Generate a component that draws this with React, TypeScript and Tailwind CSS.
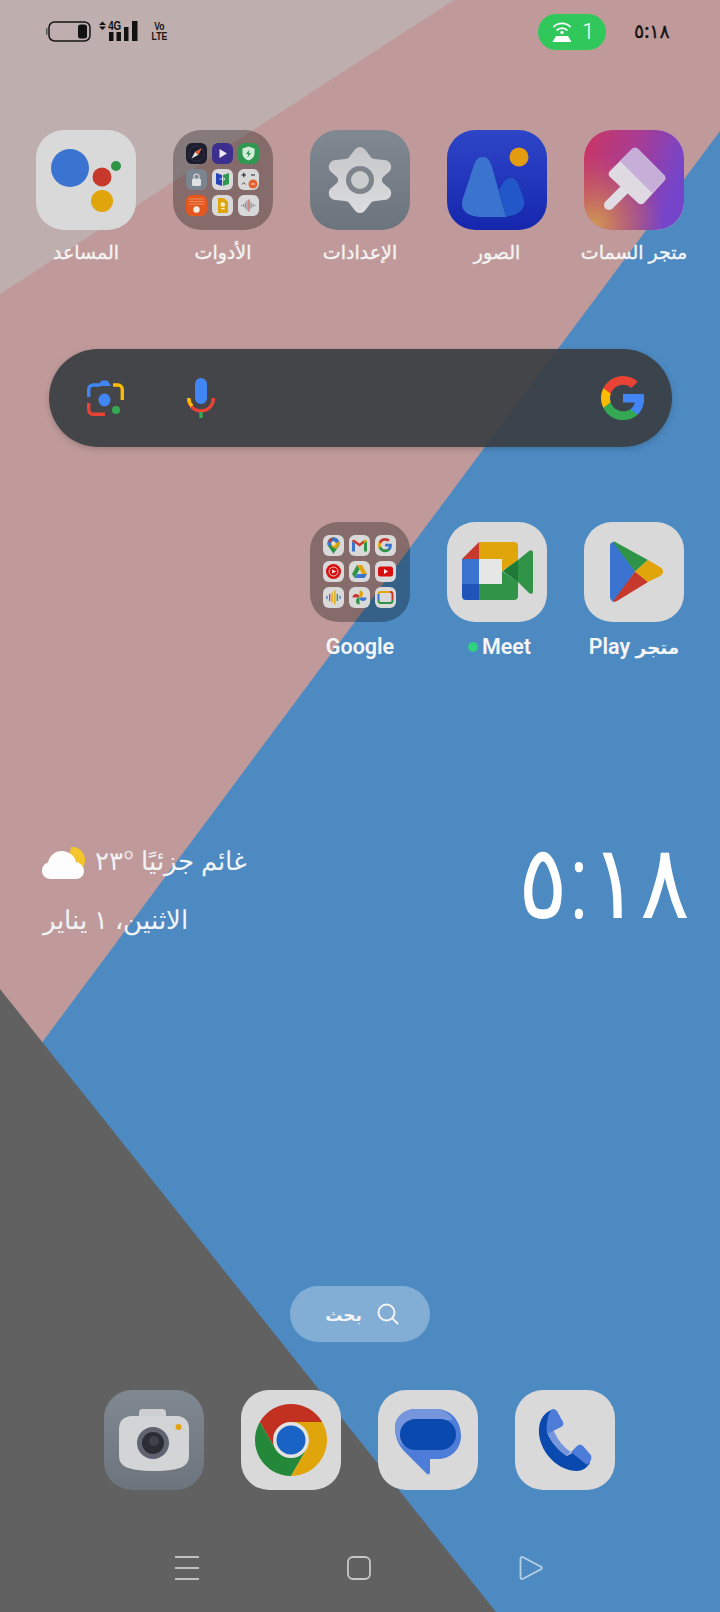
import React from "react";

const Tile = ({ children, className = "bg-[#d9d9d9]" }: { children: React.ReactNode; className?: string }) => (
  <div className={`w-[100px] h-[100px] rounded-[28px] overflow-hidden shrink-0 ${className}`}>{children}</div>
);

const S = ({ children }: { children: React.ReactNode }) => (
  <svg viewBox="0 0 100 100" className="w-full h-full block">{children}</svg>
);

const Mini = ({ children, bg = "bg-[#d9d9d9]" }: { children?: React.ReactNode; bg?: string }) => (
  <div className={`w-[21px] h-[21px] rounded-[6px] overflow-hidden ${bg}`}>
    <svg viewBox="0 0 21 21" className="w-full h-full block">{children}</svg>
  </div>
);

const Folder = ({ children }: { children: React.ReactNode }) => (
  <div className="w-[100px] h-[100px] rounded-[28px] bg-[rgba(0,0,0,0.3)] grid grid-cols-[repeat(3,21px)] grid-rows-[repeat(3,21px)] gap-[5px] p-[13px] shrink-0">
    {children}
  </div>
);

const App_Cell = ({ icon, label, latin }: { icon: React.ReactNode; label: React.ReactNode; latin?: boolean }) => (
  <div className="flex flex-col items-center">
    {icon}
    <div
      className={
        latin
          ? "mt-[13px] h-[24px] leading-[24px] text-[21.5px] font-semibold text-[#f6f6f6] whitespace-nowrap font-['Roboto','DejaVu_Sans',sans-serif]"
          : "mt-[10px] h-[24px] leading-[24px] text-[19px] font-medium text-[#f4f4f4] [-webkit-text-stroke:0.35px_#f4f4f4] whitespace-nowrap font-['Noto_Sans','DejaVu_Sans',sans-serif]"
      }
    >
      {label}
    </div>
  </div>
);

const GoogleG = ({ className }: { className?: string }) => (
  <svg viewBox="1 1 22 22" className={className}>
    <path fill="#4285F4" d="M22.56 12.25c0-.78-.07-1.53-.2-2.25H12v4.26h5.92c-.26 1.37-1.04 2.53-2.21 3.31v2.77h3.57c2.08-1.92 3.28-4.74 3.28-8.09z" />
    <path fill="#34A853" d="M12 23c2.97 0 5.46-.98 7.28-2.66l-3.57-2.77c-.98.66-2.23 1.06-3.71 1.06-2.86 0-5.29-1.93-6.16-4.53H2.18v2.84C3.99 20.53 7.7 23 12 23z" />
    <path fill="#FBBC05" d="M5.84 14.09c-.22-.66-.35-1.36-.35-2.09s.13-1.43.35-2.09V7.07H2.18C1.43 8.55 1 10.22 1 12s.43 3.45 1.18 4.93l2.85-2.22.81-.62z" />
    <path fill="#EA4335" d="M12 5.38c1.62 0 3.06.56 4.21 1.64l3.15-3.15C17.45 2.09 14.97 1 12 1 7.7 1 3.99 3.47 2.18 7.07l3.66 2.84c.87-2.6 3.3-4.53 6.16-4.53z" />
  </svg>
);

const Assistant = () => (
  <Tile>
    <S>
      <circle cx="34" cy="38" r="19" fill="#3b74d0" />
      <circle cx="66" cy="47" r="9.5" fill="#c8392d" />
      <circle cx="80" cy="36" r="5" fill="#2f9448" />
      <circle cx="66" cy="71" r="11" fill="#dfa50a" />
    </S>
  </Tile>
);

const Tools = () => (
  <Folder>
    <Mini bg="bg-[#1c1e2e]">
      <circle cx="10.5" cy="10.5" r="7.5" fill="none" stroke="#555a6c" strokeWidth="0.7" strokeDasharray="1 1.2" />
      <path d="M15.5 5.5 L9 9 L5.5 15.5 L12 12Z" fill="#e5e5e5" />
      <path d="M15.5 5.5 L9 9 L12 12Z" fill="#e2562c" />
    </Mini>
    <Mini bg="bg-[#3d2f8d]">
      <path d="M7.5 6 L15 10.5 L7.5 15Z" fill="#ece9f5" />
    </Mini>
    <Mini bg="bg-[#2f9750]">
      <path d="M10.5 3.5 L16.5 5.5 V10.5 C16.5 14 13.5 16.5 10.5 17.5 C7.5 16.5 4.5 14 4.5 10.5 V5.5Z" fill="#d3ecd9" />
      <path d="M11.5 6.5 L8 11 H10.2 L9.5 14.5 L13 10 H10.8Z" fill="#2f9750" />
    </Mini>
    <Mini bg="bg-[#7b8590]">
      <path d="M8 10 V7.5 A2.5 2.5 0 0 1 13 7.5 V10" fill="none" stroke="#dfe1e3" strokeWidth="1.1" />
      <rect x="6" y="9.5" width="9" height="7.5" rx="1.6" fill="#dfe1e3" />
    </Mini>
    <Mini>
      <path d="M4 4 L10 6 V17 L4 15Z" fill="#2444b8" />
      <path d="M17 4 L11 6 V17 L17 15Z" fill="#2f9750" />
      <path d="M7.5 10 H13 L11.5 8.5 M13 10 L11.5 11.5" stroke="#d5e2ee" strokeWidth="0.9" fill="none" />
    </Mini>
    <Mini>
      <path d="M3.5 6 H8 M5.8 3.8 V8.2 M13 6 H17" stroke="#222" strokeWidth="1.1" />
      <path d="M4 15.5 L5.8 13.5 L7.6 15.5" stroke="#444" strokeWidth="0.9" fill="none" />
      <circle cx="15" cy="15" r="4.5" fill="#e3602c" />
      <path d="M13 15 H17" stroke="#f6e6de" strokeWidth="1.1" />
    </Mini>
    <Mini bg="bg-[#e4581f]">
      <path d="M3 4 H18 M3 6.5 H18 M3 9 H18" stroke="#f09a72" strokeWidth="0.8" />
      <circle cx="10.5" cy="14.5" r="3.2" fill="#f5e9e2" />
    </Mini>
    <Mini>
      <path d="M6 3 H12 L16 7 V18 H6Z" fill="#dfa50a" />
      <circle cx="10.8" cy="9.5" r="2.3" fill="#f6edcf" />
      <rect x="9" y="13" width="3.6" height="1.2" fill="#f6edcf" />
    </Mini>
    <Mini>
      <path d="M3 10.5 H4.2 M5.6 9 V12 M7.3 7.5 V13.5 M9 5.5 V15.5" stroke="#6b7177" strokeWidth="0.8" />
      <path d="M11 4.5 V16.5" stroke="#c8392d" strokeWidth="1" />
      <path d="M13 7.5 V13.5 M15 9 V12 M17 10 V11" stroke="#6b7177" strokeWidth="0.8" />
    </Mini>
  </Folder>
);

const Settings = () => (
  <Tile className="bg-gradient-to-b from-[#808891] to-[#6c747e]">
    <svg viewBox="0 0 100 100" className="w-full h-full block">
      <defs>
        <linearGradient id="gear" x1="0" y1="0" x2="0" y2="1">
          <stop offset="0" stopColor="#c4c6c9" />
          <stop offset="1" stopColor="#dcdddf" />
        </linearGradient>
      </defs>
      <path
        d="M50 17 C53 17 55 19 57 22 L60 26 C61 28 63 29 65 29 L74 30 C80 30 83 36 80 41 L73 47 C71.500 49 71.500 51 73 53 L80 59 C83 64 80 70 74 70 L65 71 C63 71 61 72 60 74 L57 78 C55 81 53 83 50 83 C47 83 45 81 43 78 L40 74 C39 72 37 71 35 71 L26 70 C20 70 17 64 20 59 L27 53 C28.500 51 28.500 49 27 47 L20 41 C17 36 20 30 26 30 L35 29 C37 29 39 28 40 26 L43 22 C45 19 47 17 50 17Z"
        fill="url(#gear)"
      />
      <circle cx="50" cy="50" r="11.500" fill="#c9cbcd" stroke="#7d848c" strokeWidth="5" />
    </svg>
  </Tile>
);

const Photos = () => (
  <Tile className="bg-gradient-to-b from-[#2f45c8] to-[#1526ad]">
    <S>
      <path d="M64 48 C68 48 70 51 72 56 L77 70 C79 78 72 85 62 86 L59 87 L52 60 C55 55 58 48 64 48Z" fill="#2157c8" />
      <path d="M36 27 C41 27 43 31 45 37 L59 87 H36 C20 87 12 80 16 68 L27 35 C29 30 31 27 36 27Z" fill="#3a74cf" />
      <circle cx="72" cy="27" r="9.5" fill="#e39c10" />
    </S>
  </Tile>
);

const Theme = () => (
  <Tile>
    <svg viewBox="0 0 100 100" className="w-full h-full block">
      <defs>
        <linearGradient id="th" x1="0" y1="0" x2="1" y2="0.35">
          <stop offset="0" stopColor="#cc3560" />
          <stop offset="0.5" stopColor="#a93c92" />
          <stop offset="1" stopColor="#7445cb" />
        </linearGradient>
        <radialGradient id="th2" cx="0.1" cy="0.95" r="0.7">
          <stop offset="0" stopColor="#cf9a52" />
          <stop offset="1" stopColor="#cf6a52" stopOpacity="0" />
        </radialGradient>
      </defs>
      <rect width="100" height="100" fill="url(#th)" />
      <rect width="100" height="100" fill="url(#th2)" />
      <path d="M42 58 L25 75" stroke="#e1dde4" strokeWidth="10" strokeLinecap="round" />
      <path d="M48 19 A4 4 0 0 1 54 19 L80 45 A4 4 0 0 1 80 51 L60 73 A4 4 0 0 1 54 73 L26 47 A4 4 0 0 1 26 41Z" fill="#dfdae2" />
      <path d="M48 19 A4 4 0 0 1 54 19 L80 45 A4 4 0 0 1 80 51 L68 63 L36 31Z" fill="#c7aed8" />
    </svg>
  </Tile>
);

const Meet = () => (
  <Tile>
    <S>
      <path d="M71 38 L82 29 C84 27.500 86 28 86 31 V69 C86 72 84 72.500 82 71 L71 60 L56 49Z" fill="#2f9448" />
      <path d="M32 20 H67 A4 4 0 0 1 71 24 V38 L55 49 V37 H32Z" fill="#dfa50a" />
      <path d="M32 62 H55 V49 L71 60 V74 A4 4 0 0 1 67 78 H32Z" fill="#2f9448" />
      <path d="M71 38 L56 49 L71 60Z" fill="#1f7a38" />
      <path d="M15 37 L32 20 V37Z" fill="#c8392d" />
      <rect x="15" y="37" width="17" height="25" fill="#3b74d0" />
      <path d="M15 62 H32 V78 H19 A4 4 0 0 1 15 74Z" fill="#1f55b8" />
      <rect x="32" y="37" width="23" height="25" fill="#e6e6e6" />
    </S>
  </Tile>
);

const Play = () => (
  <Tile>
    <S>
      <path d="M26 24 C26 21 28 19.500 31 20 L51 49.500 L31 79.500 C28 80 26 78 26 75Z" fill="#3b74d0" />
      <path d="M29 20 C30 19.500 32 20 33 21 L64 38 L51 49.500Z" fill="#2f9448" />
      <path d="M29 79.500 C30 80 32 79.500 33 79 L64 60 L51 49.500Z" fill="#c8392d" />
      <path d="M64 38 L76 45 C80 47 80 52 76 54 L64 60 L51 49.500Z" fill="#dfa50a" />
    </S>
  </Tile>
);

const Camera = () => (
  <Tile className="bg-gradient-to-b from-[#808891] to-[#6c747e]">
    <S>
      <path d="M35 29 V23 A4 4 0 0 1 39 19 H58 A4 4 0 0 1 62 23 V29 Z" fill="#cdcfd1" />
      <path d="M28 26 H73 C80 26 85 31 85 38 V66 C85 75 78 78 70 79.500 C55 81.500 45 81.500 30 79.500 C22 78 15 75 15 66 V39 C15 31 20 26 28 26Z" fill="#d2d4d6" />
      <circle cx="49" cy="53" r="16" fill="#5f6470" />
      <circle cx="49" cy="53" r="11" fill="#2a2d33" />
      <circle cx="50" cy="51" r="5" fill="#3e424a" />
      <circle cx="74.500" cy="37" r="3" fill="#e5a310" />
    </S>
  </Tile>
);

const Chrome = () => (
  <Tile>
    <S>
      <path d="M18.8 32 A36 36 0 0 1 81.2 32 L50 32 L34.400 59Z" fill="#c2301f" />
      <path d="M18.8 32 A36 36 0 0 0 50 86 L65.600 59 L34.400 59Z" fill="#23883a" />
      <path d="M81.2 32 L50 32 L65.600 59 L50 86 A36 36 0 0 0 81.2 32Z" fill="#dfa50a" />
      <circle cx="50" cy="50" r="18" fill="#e3e3e3" />
      <circle cx="50" cy="50" r="14.500" fill="#1a63c6" />
    </S>
  </Tile>
);

const Messages = () => (
  <Tile>
    <S>
      <path d="M38 19 H58 C72 19 83 30 83 46 C83 59 73 69 60 69 H52 V82 C52 85 50 85 48 83 L26 61 C20 55 17 46 17 38 C17 27 26 19 38 19Z" fill="#4e7cd9" />
      <path d="M38 19 H58 C65 19 71 23 75 30 H37 C28 30 22 36 22 44 C22 49 24 53 26 57 C20 52 17 45 17 38 C17 27 26 19 38 19Z" fill="#7596dc" />
      <rect x="22" y="29" width="56" height="31" rx="15.500" fill="#0a4aae" />
    </S>
  </Tile>
);

const Phone = () => (
  <Tile>
    <S>
      <path d="M36 20 C27 24 23 33 24 44 C26 64 44 81 62 81 C67 81 72 78 75 73 L62 60 L52 66 C43 60 36 52 32 42 L42 36Z" fill="#0a4aae" />
      <path d="M32 42 C36 52 43 60 52 66 L56 62 C48 57 42 49 38 39Z" fill="#7596dc" />
      <path d="M36 20 C38 18 40 19 42 21 L48 32 C49 34 48 36 46 37 L32 44 C31 36 32 27 36 20Z" fill="#4e7cd9" />
      <path d="M56 62 L62 56 C64 54 66 54 68 56 L75 64 C77 66 77 70 74 73 L72 75Z" fill="#4e7cd9" />
    </S>
  </Tile>
);

function GoogleGInner() {
  return (
    <g transform="translate(-1.000 -1.000) scale(0.95)">
      <path fill="#3b74d0" d="M22.56 12.25c0-.78-.07-1.53-.2-2.25H12v4.26h5.92c-.26 1.37-1.04 2.53-2.21 3.31v2.77h3.57c2.08-1.92 3.28-4.74 3.28-8.09z" />
      <path fill="#2f9448" d="M12 23c2.97 0 5.46-.98 7.28-2.66l-3.57-2.77c-.98.66-2.23 1.06-3.71 1.06-2.86 0-5.29-1.93-6.16-4.53H2.18v2.84C3.99 20.53 7.7 23 12 23z" />
      <path fill="#dfa50a" d="M5.84 14.09c-.22-.66-.35-1.36-.35-2.09s.13-1.43.35-2.09V7.07H2.18C1.43 8.55 1 10.22 1 12s.43 3.45 1.18 4.93l2.85-2.22.81-.62z" />
      <path fill="#c8392d" d="M12 5.38c1.62 0 3.06.56 4.21 1.64l3.15-3.15C17.45 2.09 14.97 1 12 1 7.7 1 3.99 3.47 2.18 7.07l3.66 2.84c.87-2.6 3.3-4.53 6.16-4.53z" />
    </g>
  );
}

const GoogleFolder = () => (
  <Folder>
    <Mini>
      <path d="M10.5 2.500 C14 2.500 16.500 5.200 16.500 8.500 C16.500 12 12.500 15 10.500 19 C8.500 15 4.500 12 4.500 8.500 C4.500 5.200 7 2.500 10.500 2.500Z" fill="#2f9448" />
      <path d="M10.500 2.500 C14 2.500 16.500 5.200 16.500 8.500 L5.500 11 C4.800 10.500 4.500 9.500 4.500 8.500 C4.500 5.200 7 2.500 10.500 2.500Z" fill="#3b74d0" />
      <path d="M5 6 C6 4 8 2.800 10 2.500 L7 8Z" fill="#c8392d" />
      <path d="M16 6.500 C17 9 15 12 13 14 L8 11Z" fill="#dfa50a" />
      <circle cx="10.500" cy="8.500" r="2.200" fill="#f3e3b4" />
    </Mini>
    <Mini>
      <path d="M3 16.500 V6 L6 8.200 V16.500Z" fill="#3b74d0" />
      <path d="M15 16.500 V8.200 L18 6 V16.500Z" fill="#2f9448" />
      <path d="M3 6 C3.500 4.500 5 4.500 6 5.200 L10.500 8.500 L15 5.200 L15 8.200 L10.500 11.500Z" fill="#c8392d" />
      <path d="M15 5.200 C16 4.500 17.500 4.500 18 6 L15 8.200Z" fill="#dfa50a" />
    </Mini>
    <Mini>
      <g transform="translate(3 3) scale(0.68)">
        <GoogleGInner />
      </g>
    </Mini>
    <Mini>
      <circle cx="10.500" cy="10.500" r="7.500" fill="#d90f0f" />
      <circle cx="10.500" cy="10.500" r="4.500" fill="none" stroke="#f2f2f2" strokeWidth="0.8" />
      <path d="M9.200 8.500 L13 10.500 L9.200 12.500Z" fill="#f2f2f2" />
    </Mini>
    <Mini>
      <path d="M8 4 H13 L18 13 L15.500 17 Z" fill="#dfa50a" />
      <path d="M8 4 L3 13 L5.500 17 L10.500 8.500Z" fill="#2f9448" />
      <path d="M5.500 17 H15.500 L18 13 H8Z" fill="#3b74d0" />
    </Mini>
    <Mini>
      <rect x="3" y="5.500" width="15" height="10" rx="2.500" fill="#d90f0f" />
      <path d="M9 8 L13 10.500 L9 13Z" fill="#f2f2f2" />
    </Mini>
    <Mini>
      <path d="M4 9.500 V11.500" stroke="#3b74d0" strokeWidth="1.300" strokeLinecap="round" />
      <path d="M6.700 7.500 V13.500" stroke="#c8392d" strokeWidth="1.300" strokeLinecap="round" />
      <path d="M9.200 6 V15" stroke="#dfa50a" strokeWidth="1.300" strokeLinecap="round" />
      <path d="M11.800 4 V17" stroke="#dfa50a" strokeWidth="1.300" strokeLinecap="round" />
      <path d="M14.300 7.500 V13.500" stroke="#2f9448" strokeWidth="1.300" strokeLinecap="round" />
      <path d="M17 9.500 V11.500" stroke="#3b74d0" strokeWidth="1.300" strokeLinecap="round" />
    </Mini>
    <Mini>
      <path d="M10.500 10.500 A3.500 3.500 0 0 1 3.500 10.500Z" fill="#c8392d" transform="rotate(180 7 10.500)" />
      <path d="M10.500 10.500 A3.500 3.500 0 0 1 10.500 3.500Z" fill="#dfa50a" transform="rotate(180 10.500 7)" />
      <path d="M10.500 10.500 A3.500 3.500 0 0 1 17.500 10.500Z" fill="#3b74d0" transform="rotate(180 14 10.500)" />
      <path d="M10.500 10.500 A3.500 3.500 0 0 1 10.500 17.500Z" fill="#2f9448" transform="rotate(180 10.500 14)" />
    </Mini>
    <Mini>
      <rect x="3.500" y="5" width="14" height="11" rx="2.200" fill="none" stroke="#dfa50a" strokeWidth="1.800" />
      <path d="M3.500 13 V13.800 A2.200 2.200 0 0 0 5.700 16 H15.300 A2.200 2.200 0 0 0 17.500 13.800 V13" fill="none" stroke="#2f9448" strokeWidth="1.800" />
      <path d="M15 5 H15.300 A2.200 2.200 0 0 1 17.500 7.200 V13" fill="none" stroke="#c8392d" strokeWidth="1.800" />
      <path d="M3.500 7 V13" fill="none" stroke="#3b74d0" strokeWidth="1.800" />
    </Mini>
  </Folder>
);

const Lens = () => (
  <svg viewBox="0 0 37 36" className="w-[37px] h-[36px]">
    <path d="M1.700 17 V9.500 A4.500 4.500 0 0 1 6.200 5 H13" fill="none" stroke="#4285F4" strokeWidth="3.400" />
    <path d="M11 6 L14.500 0.500 H20.500 L24 6Z" fill="#4285F4" />
    <path d="M26 5 H31 A4.500 4.500 0 0 1 35.300 9.500 V20" fill="none" stroke="#FBBC05" strokeWidth="3.400" />
    <path d="M1.700 23 V29.500 A4.500 4.500 0 0 0 6.200 34.300 H18" fill="none" stroke="#EA4335" strokeWidth="3.400" />
    <ellipse cx="17.500" cy="20" rx="6" ry="6.500" fill="#4285F4" />
    <ellipse cx="29" cy="30" rx="4" ry="4" fill="#34A853" />
  </svg>
);

const Mic = () => (
  <svg viewBox="0 0 28 40" className="w-[28px] h-[40px]">
    <rect x="8" y="0" width="12" height="26" rx="6" fill="#4285F4" />
    <path d="M1.700 20 A12.300 12.300 0 0 0 14 33 A12.300 12.300 0 0 0 26.300 20" fill="none" stroke="#EA4335" strokeWidth="3.400" />
    <path d="M1.700 20 A12.300 12.300 0 0 0 5 28" fill="none" stroke="#FBBC05" strokeWidth="3.400" />
    <rect x="12.300" y="34" width="3.400" height="6" fill="#34A853" />
  </svg>
);

const Cloud = () => (
  <svg viewBox="0 0 44 32" className="w-[44px] h-[32px] mt-[5px]">
    <path d="M29 0 A13 13 0 0 1 43 14 A13 13 0 0 1 40 22 L28 6Z" fill="#f5c52c" />
    <path d="M9 32 C3 32 0 28 0 24 C0 19 3 16.500 6 15.500 C8 8 13 4 20 4 C27 4 33 9 34 15 C39 16 42 20 42 24 C42 28 39 32 34 32Z" fill="#fdfdfd" />
  </svg>
);

export default function App() {
  const ar = "font-['Noto_Sans','DejaVu_Sans',sans-serif]";
  return (
    <div className="relative w-[720px] h-[1612px] overflow-hidden bg-[#c09a9a]">
      <svg viewBox="0 0 720 1612" className="absolute inset-0 w-full h-full">
        <polygon points="454,0 0,294 0,0" fill="#bfaeae" />
        <polygon points="720,131 720,1612 0,1612 0,1099" fill="#4d8ac2" />
        <polygon points="0,989 496,1612 0,1612" fill="#616161" />
      </svg>

      <div className="relative flex flex-col">
        {/* status bar */}
        <div className="h-[62px] flex items-center justify-between pl-[46px] pr-[47px]">
          <div className="flex items-center">
            <svg viewBox="0 0 45 21" className="w-[45px] h-[21px]">
              <rect x="0" y="7" width="1.500" height="7" rx="0.700" fill="#555" />
              <rect x="3" y="1" width="41" height="19" rx="5.500" fill="none" stroke="#161616" strokeWidth="1.500" />
              <rect x="32" y="3.500" width="9" height="14" rx="2.500" fill="#111" />
            </svg>
            <div className="relative w-[41px] h-[21px] ml-[8px]">
              <svg viewBox="0 0 41 21" className="absolute inset-0 w-full h-full">
                <path d="M0 4 L3.500 0.500 L7 4Z M0 5.500 H7 L3.500 9Z" fill="#111" />
                <rect x="10" y="11" width="4.500" height="9" fill="#111" />
                <rect x="17.500" y="11" width="4.500" height="9" fill="#111" />
                <rect x="25" y="6" width="4.500" height="14" fill="#111" />
                <rect x="33" y="0" width="5.500" height="20" fill="#111" />
              </svg>
              <span className="absolute left-[7px] top-[-2px] text-[13px] leading-[13px] font-bold text-[#111] scale-x-75 font-['Liberation_Sans',sans-serif]">4G</span>
            </div>
            <span className="ml-[9px] block whitespace-pre text-center text-[#161616] font-bold text-[11.5px] leading-[10px] scale-x-75 font-['Liberation_Sans',sans-serif]">{"Vo\nLTE"}</span>
          </div>
          <div className="flex items-center">
            <div className="mt-[2px] w-[68px] h-[36px] rounded-full bg-[#30c85a] flex items-center pl-[14px] gap-[10px]">
              <svg viewBox="0 0 20 20" className="w-[20px] h-[20px]">
                <path d="M1.500 5 A12 12 0 0 1 18.500 5 M4.500 8.500 A7.500 7.500 0 0 1 15.500 8.500" fill="none" stroke="#fff" strokeWidth="1.800" />
                <circle cx="10" cy="10.500" r="1.700" fill="#fff" />
                <path d="M4 14 H16 L19.500 20 H0.500Z" fill="#fff" />
              </svg>
              <span className="text-[22px] leading-none font-light text-white font-['Roboto',sans-serif]">1</span>
            </div>
            <span className={`ml-[28px] w-[39px] text-[19px] leading-none font-medium [-webkit-text-stroke:0.3px_#111] text-[#111] whitespace-nowrap ${ar}`}>٥:١٨</span>
          </div>
        </div>

        {/* first app row */}
        <div className="mt-[68px] ml-[17.5px] grid grid-cols-[repeat(5,137px)]">
          <App_Cell icon={<Assistant />} label="المساعد" />
          <App_Cell icon={<Tools />} label="الأدوات" />
          <App_Cell icon={<Settings />} label="الإعدادات" />
          <App_Cell icon={<Photos />} label="الصور" />
          <App_Cell icon={<Theme />} label="متجر السمات" />
        </div>

        {/* google bar */}
        <div className="mt-[85px] ml-[49px] w-[623px] h-[98px] rounded-full bg-[rgba(58,62,66,0.92)] shadow-[0_2px_6px_rgba(0,0,0,0.18)] flex items-center pl-[38px] pr-[27px]">
          <Lens />
          <div className="ml-[63px]">
            <Mic />
          </div>
          <div className="flex-1" />
          <GoogleG className="w-[44px] h-[44px]" />
        </div>

        {/* second app row */}
        <div className="mt-[75px] ml-[17.5px] grid grid-cols-[repeat(5,137px)]">
          <div />
          <div />
          <App_Cell icon={<GoogleFolder />} label="Google" latin />
          <App_Cell
            icon={<Meet />}
            latin
            label={
              <span className="flex items-center gap-[4px] pl-[5px]">
                <span className="w-[10px] h-[10px] rounded-full bg-[#2fd07f]" />
                Meet
              </span>
            }
          />
          <App_Cell
            icon={<Play />}
            latin
            label={
              <span dir="rtl">
                <span className="text-[18.5px]">متجر</span> Play
              </span>
            }
          />
        </div>

        {/* widget */}
        <div className="mt-[181px] h-[100px] pl-[43px] pr-[31px] flex justify-between items-start">
          <div className="flex flex-col items-start">
            <div className="flex items-center h-[40px] -ml-[1px]">
              <Cloud />
              <span className={`ml-[9px] text-[26.4px] leading-[40px] font-light text-[#f0f3f6] whitespace-nowrap ${ar}`} dir="rtl">غائم جزئيًا °٢٣</span>
            </div>
            <span className={`mt-[19px] text-[26.4px] leading-[40px] font-light text-[#f0f3f6] whitespace-nowrap ${ar}`} dir="rtl">الاثنين، ١ يناير</span>
          </div>
          <span className={`-mt-[12px] text-[103px] leading-[100px] scale-x-90 origin-right font-light text-white whitespace-nowrap ${ar}`}>٥:١٨</span>
        </div>

        {/* search pill */}
        <div className="mt-[346px] self-center w-[140px] h-[56px] rounded-full bg-[rgba(255,255,255,0.3)] flex items-center justify-center gap-[15px] pl-[4px]">
          <span className={`text-[17px] leading-none font-semibold text-[#f4f4f4] ${ar}`}>بحث</span>
          <svg viewBox="0 0 22 22" className="w-[22px] h-[22px]">
            <circle cx="9.500" cy="9.500" r="8" fill="none" stroke="#f4f4f4" strokeWidth="2" />
            <path d="M15 15 L21 21" stroke="#f4f4f4" strokeWidth="2" />
          </svg>
        </div>

        {/* dock */}
        <div className="mt-[48px] ml-[104px] flex gap-[37px]">
          <Camera />
          <Chrome />
          <Messages />
          <Phone />
        </div>

        {/* nav */}
        <div className="mt-[66px] pl-[175px] flex items-center h-[24px]">
          <svg viewBox="0 0 24 24" className="w-[24px] h-[24px]">
            <path d="M0 1 H24 M0 12 H24 M0 23 H24" stroke="rgba(255,255,255,0.6)" strokeWidth="1.800" />
          </svg>
          <svg viewBox="0 0 24 24" className="ml-[148px] w-[24px] h-[24px]">
            <rect x="1" y="1" width="22" height="22" rx="5" fill="none" stroke="rgba(255,255,255,0.65)" strokeWidth="1.800" />
          </svg>
          <svg viewBox="0 0 24 24" className="ml-[148px] w-[24px] h-[24px]">
            <path d="M1.500 3 C1.500 1.500 2.500 0.500 4 1.200 L22 10.700 C23.200 11.500 23.200 12.500 22 13.300 L4 22.800 C2.500 23.500 1.500 22.500 1.500 21Z" fill="none" stroke="rgba(255,255,255,0.6)" strokeWidth="1.800" />
          </svg>
        </div>
      </div>
    </div>
  );
}
